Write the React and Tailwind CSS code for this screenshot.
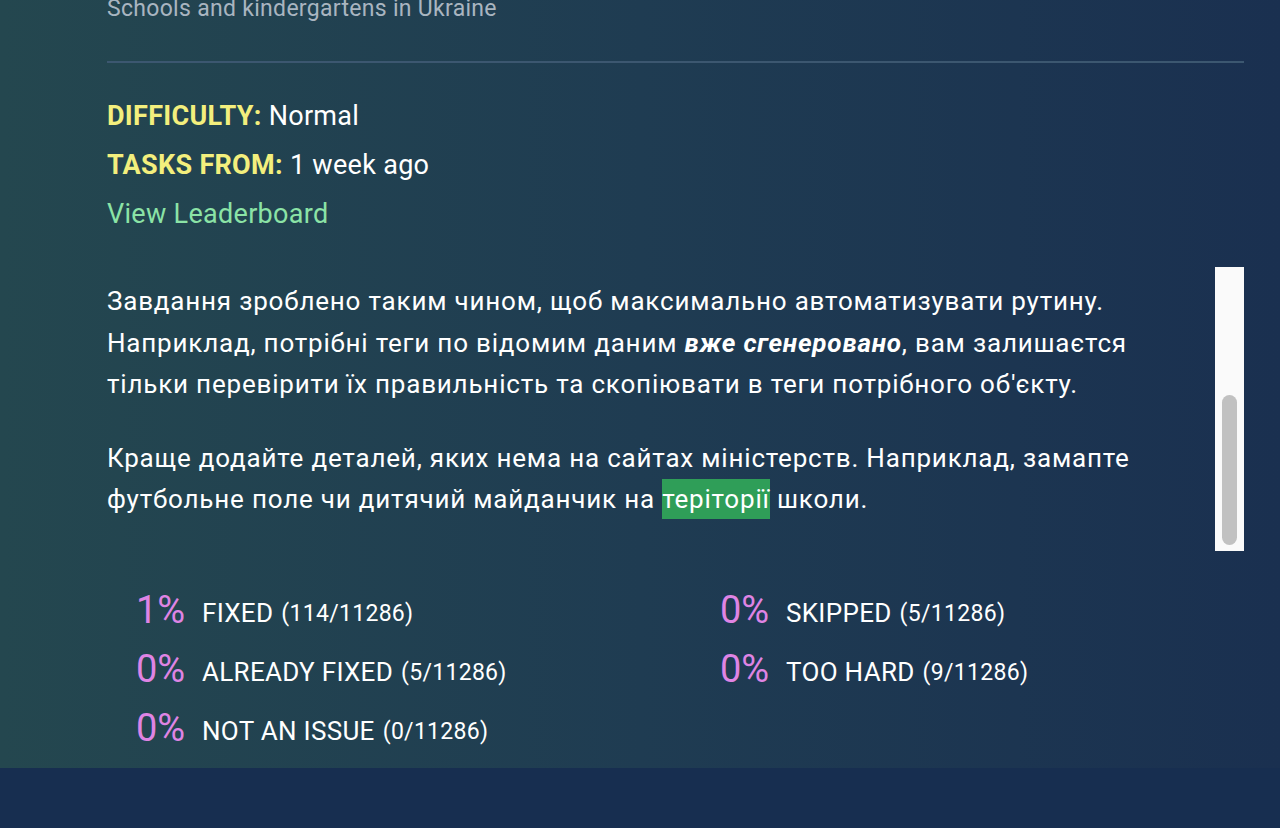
import React from "react";

const stats = [
  { pct: "1%", label: "FIXED", count: "(114/11286)" },
  { pct: "0%", label: "SKIPPED", count: "(5/11286)" },
  { pct: "0%", label: "ALREADY FIXED", count: "(5/11286)" },
  { pct: "0%", label: "TOO HARD", count: "(9/11286)" },
  { pct: "0%", label: "NOT AN ISSUE", count: "(0/11286)" },
];

const StatItem = ({ pct, label, count }) => (
  <div className="flex items-end h-[59px] pb-[12px] tracking-[0.3px]">
    <span className="text-[38px] leading-[38px] text-[#df84e4] w-[66px] tracking-normal">{pct}</span>
    <span className="text-[26px] leading-[32px] text-white">{label}</span>
    <span className="text-[23px] leading-[31px] text-white ml-[8px]">{count}</span>
  </div>
);

export default function App() {
  return (
    <div
      className="w-[1280px] h-[828px] overflow-hidden flex flex-col bg-[#172e50]"
      style={{ fontFamily: "Roboto, 'Noto Sans', sans-serif" }}
    >
      <div className="h-[768px] bg-gradient-to-r from-[#24474f] via-[#1f3c52] to-[#1a3050] px-[107px] pr-[36px] shrink-0">
        <div className="-mt-[6px] text-[23px] leading-[30px] tracking-[0.3px] text-[#a9b5c0]">
          Schools and kindergartens in Ukraine
        </div>
        <div className="mt-[37px] h-[2px] bg-[#3c5770]" />

        <div className="mt-[29px] flex flex-col text-[27px] leading-[49px] tracking-[0.3px]">
          <div>
            <span className="font-bold text-[#f3ef7d]">DIFFICULTY:</span>{" "}
            <span className="text-white">Normal</span>
          </div>
          <div>
            <span className="font-bold text-[#f3ef7d]">TASKS FROM:</span>{" "}
            <span className="text-white">1 week ago</span>
          </div>
          <div className="text-[#8be3a6]">View Leaderboard</div>
        </div>

        <div className="mt-[28px] flex h-[284px]">
          <div className="flex-1 text-[26px] leading-[41.5px] tracking-[0.8px] text-white pt-[14px]">
            <p>
              Завдання зроблено таким чином, щоб максимально автоматизувати рутину.
              Наприклад, потрібні теги по відомим даним{" "}
              <b className="italic">вже сгенеровано</b>, вам залишаєтся тільки
              перевірити їх правильність та скопіювати в теги потрібного об'єкту.
            </p>
            <p className="mt-[32px]">
              Краще додайте деталей, яких нема на сайтах міністерств. Наприклад,
              замапте футбольне поле чи дитячий майданчик на{" "}
              <span className="inline-block bg-[#2f9e58] leading-[40px]">теріторії</span>{" "}
              школи.
            </p>
          </div>
          <div className="w-[29px] bg-[#fafafa] pt-[128px] px-[7px] pb-[5px]">
            <div className="h-[150px] rounded-full bg-[#c1c1c1]" />
          </div>
        </div>

        <div className="mt-[31px] grid grid-cols-[584px_1fr] pl-[29px]">
          {stats.map((s) => (
            <StatItem key={s.label} {...s} />
          ))}
        </div>
      </div>
      <div className="flex-1" />
    </div>
  );
}
